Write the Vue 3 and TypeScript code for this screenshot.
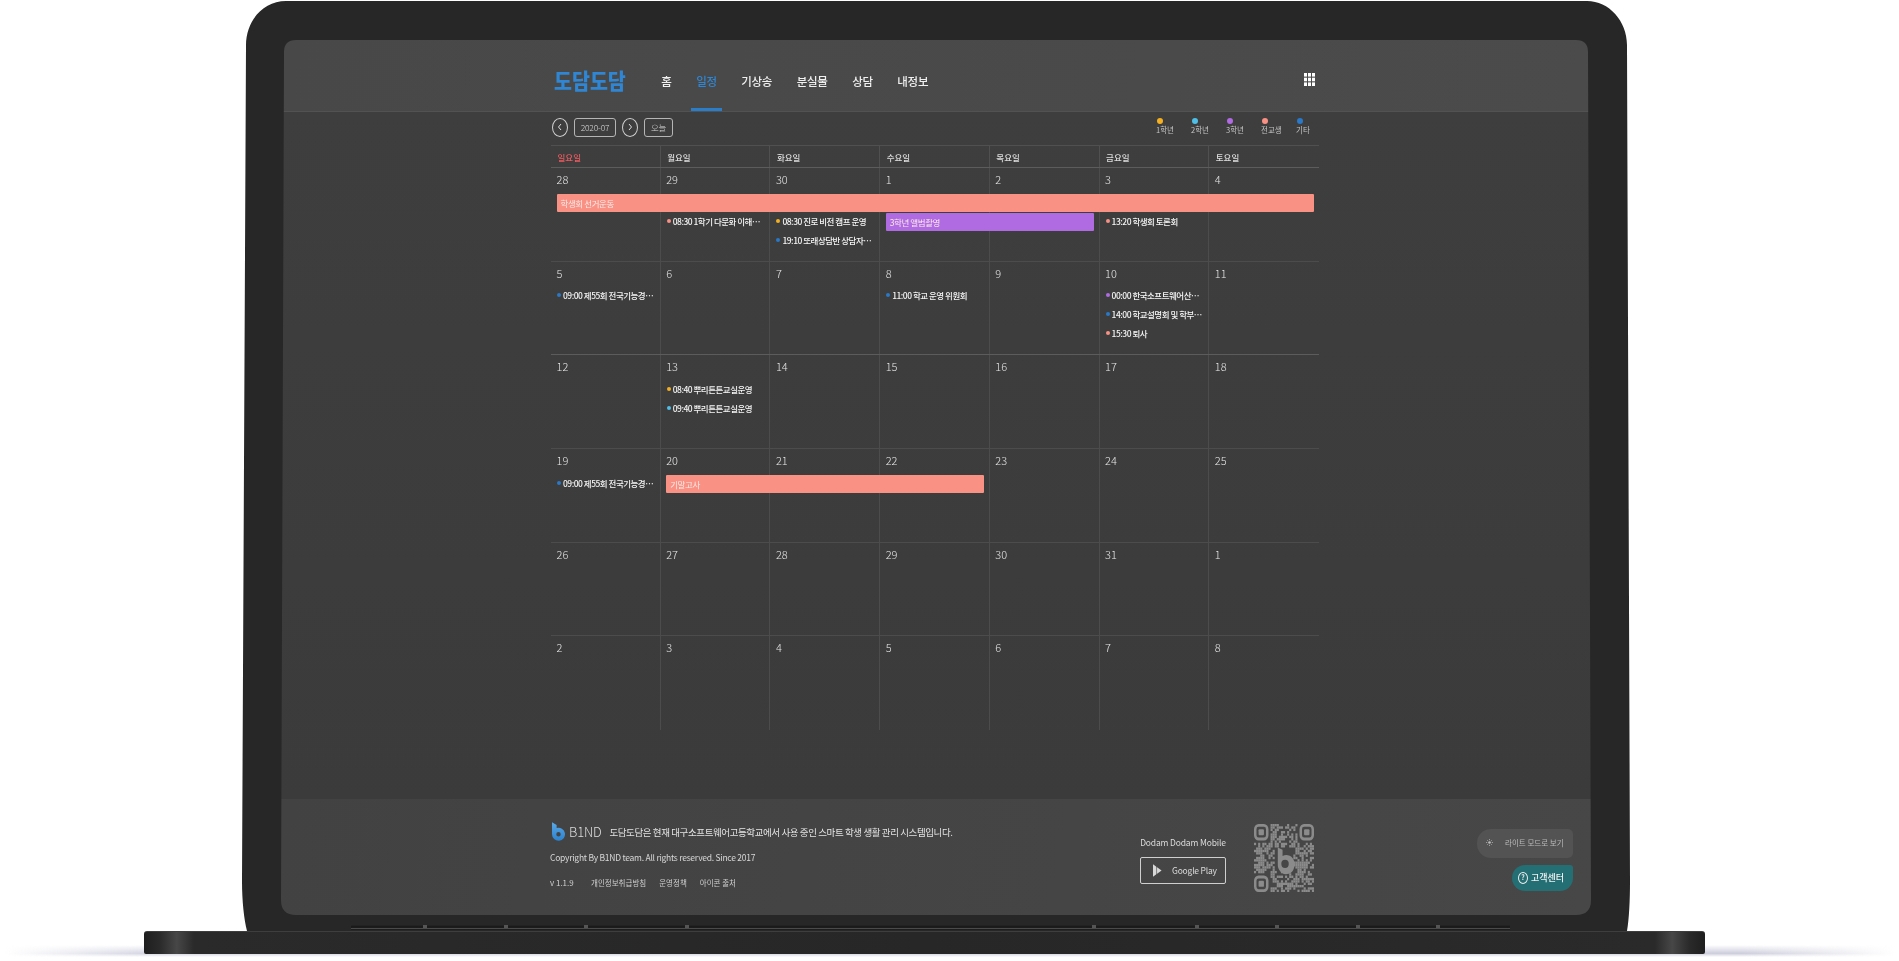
<script setup lang="ts">
type Kind = "first" | "second" | "third" | "transfer" | "etc";

interface CalEvent {
  col: number;
  row: number;
  span?: number;
  kind: Kind;
  label: string;
}

interface Week {
  days: number[];
  events: CalEvent[];
}

const navItems = ["홈", "일정", "기상송", "분실물", "상담", "내정보"];
const weekdays = ["일요일", "월요일", "화요일", "수요일", "목요일", "금요일", "토요일"];

const legend: { kind: Kind; label: string }[] = [
  { kind: "first", label: "1학년" },
  { kind: "second", label: "2학년" },
  { kind: "third", label: "3학년" },
  { kind: "transfer", label: "전교생" },
  { kind: "etc", label: "기타" },
];

const weeks: Week[] = [
  {
    days: [28, 29, 30, 1, 2, 3, 4],
    events: [
      { col: 1, row: 2, span: 7, kind: "transfer", label: "학생회 선거운동" },
      { col: 2, row: 3, kind: "transfer", label: "08:30 1학기 다문화 이해…" },
      { col: 3, row: 3, kind: "first", label: "08:30 진로 비전 캠프 운영" },
      { col: 4, row: 3, span: 2, kind: "third", label: "3학년 앨범촬영" },
      { col: 6, row: 3, kind: "transfer", label: "13:20 학생회 토론회" },
      { col: 3, row: 4, kind: "etc", label: "19:10 또래상담반 상담자…" },
    ],
  },
  {
    days: [5, 6, 7, 8, 9, 10, 11],
    events: [
      { col: 1, row: 2, kind: "etc", label: "09:00 제55회 전국기능경…" },
      { col: 4, row: 2, kind: "etc", label: "11:00 학교 운영 위원회" },
      { col: 6, row: 2, kind: "third", label: "00:00 한국소프트웨어산…" },
      { col: 6, row: 3, kind: "etc", label: "14:00 학교설명회 및 학부…" },
      { col: 6, row: 4, kind: "transfer", label: "15:30 퇴사" },
    ],
  },
  {
    days: [12, 13, 14, 15, 16, 17, 18],
    events: [
      { col: 2, row: 2, kind: "first", label: "08:40 뿌리튼튼교실운영" },
      { col: 2, row: 3, kind: "second", label: "09:40 뿌리튼튼교실운영" },
    ],
  },
  {
    days: [19, 20, 21, 22, 23, 24, 25],
    events: [
      { col: 1, row: 2, kind: "etc", label: "09:00 제55회 전국기능경…" },
      { col: 2, row: 2, span: 3, kind: "transfer", label: "기말고사" },
    ],
  },
  { days: [26, 27, 28, 29, 30, 31, 1], events: [] },
  { days: [2, 3, 4, 5, 6, 7, 8], events: [] },
];

const hingeMarks = [423, 504, 584, 685, 1092, 1195, 1275, 1356, 1436];

// 실제 코드가 아니라 모양만 맞춘 QR 패턴
const QR_SIZE = 29;
function inFinder(x: number, y: number) {
  const near = (v: number) => v < 8;
  const far = (v: number) => v > QR_SIZE - 9;
  return (near(x) && near(y)) || (far(x) && near(y)) || (near(x) && far(y));
}
function inLogo(x: number, y: number) {
  return x >= 10 && x <= 18 && y >= 10 && y <= 19;
}
const qrCells: { x: number; y: number }[] = [];
let seed = 1237;
for (let y = 0; y < QR_SIZE; y++) {
  for (let x = 0; x < QR_SIZE; x++) {
    seed = (seed * 1103515245 + 12345) & 0x7fffffff;
    if (inFinder(x, y) || inLogo(x, y)) continue;
    if ((seed >> 16) % 100 < 56) qrCells.push({ x, y });
  }
}
const qrFinders = [
  { x: 0, y: 0 },
  { x: 22, y: 0 },
  { x: 0, y: 22 },
];
</script>

<template>
  <div class="stage">
    <div class="floor"></div>

    <div class="lid">
      <div class="screen">
        <header class="topbar">
          <div class="container topbar-inner">
            <div class="logo">도담도담</div>
            <nav class="nav">
              <a
                v-for="item in navItems"
                :key="item"
                class="nav-item"
                :class="{ active: item === '일정' }"
              >{{ item }}</a>
            </nav>
            <svg class="apps" viewBox="0 0 11 13" fill="#fff">
              <template v-for="r in 3" :key="r">
                <rect v-for="c in 3" :key="c" :x="(c - 1) * 4" :y="(r - 1) * 4.7" width="3" height="3.6" />
              </template>
            </svg>
          </div>
        </header>

        <main class="main">
          <div class="container">
            <div class="toolbar">
              <div class="controls">
                <button class="round-btn">
                  <svg viewBox="0 0 6 8" class="chev"><path d="M4 1 1.5 4 4 7" /></svg>
                </button>
                <div class="box-btn month">2020-07</div>
                <button class="round-btn">
                  <svg viewBox="0 0 6 8" class="chev"><path d="M2 1 4.5 4 2 7" /></svg>
                </button>
                <div class="box-btn today">오늘</div>
              </div>
              <ul class="legend">
                <li v-for="l in legend" :key="l.kind" class="legend-item">
                  <span class="legend-dot" :class="l.kind"></span>
                  <span class="legend-label">{{ l.label }}</span>
                </li>
              </ul>
            </div>

            <div class="calendar">
              <div class="weekdays">
                <div
                  v-for="(d, i) in weekdays"
                  :key="d"
                  class="weekday"
                  :class="{ sunday: i === 0 }"
                >{{ d }}</div>
              </div>
              <div v-for="(week, w) in weeks" :key="w" class="week" :class="{ strong: w === 1 }">
                <div
                  v-for="(day, i) in week.days"
                  :key="i"
                  class="cell"
                  :style="{ gridColumn: i + 1 }"
                >{{ day }}</div>
                <template v-for="ev in week.events" :key="ev.label + ev.col">
                  <div
                    v-if="ev.span"
                    class="bar"
                    :class="ev.kind"
                    :style="{ gridColumn: `${ev.col} / span ${ev.span}`, gridRow: ev.row }"
                  >{{ ev.label }}</div>
                  <div
                    v-else
                    class="item"
                    :style="{ gridColumn: ev.col, gridRow: ev.row }"
                  >
                    <span class="item-dot" :class="ev.kind"></span>{{ ev.label }}
                  </div>
                </template>
              </div>
            </div>
          </div>
        </main>

        <footer class="footer">
          <div class="footer-left">
            <div class="footer-brand">
              <svg class="b1nd" viewBox="0 0 14 20">
                <defs>
                  <linearGradient id="b1ndBlue" x1="0" y1="0" x2="0" y2="1">
                    <stop offset="0" stop-color="#5aa9e6" />
                    <stop offset="1" stop-color="#2c82cf" />
                  </linearGradient>
                </defs>
                <path
                  fill="url(#b1ndBlue)"
                  fill-rule="evenodd"
                  d="M0 0 5 3V6.3A7 7 0 1 1 0 13ZM7 10.6A2.4 2.4 0 1 0 7 15.4 2.4 2.4 0 1 0 7 10.6Z"
                />
              </svg>
              <span class="b1nd-name">B1ND</span>
              <span class="footer-desc">도담도담은 현재 대구소프트웨어고등학교에서 사용 중인 스마트 학생 생활 관리 시스템입니다.</span>
            </div>
            <div class="copyright">Copyright By B1ND team. All rights reserved. Since 2017</div>
            <div class="footer-links">
              <span class="version">v 1.1.9</span>
              <a>개인정보취급방침</a>
              <a>운영정책</a>
              <a>아이콘 출처</a>
            </div>
          </div>

          <div class="store">
            <div class="store-title">Dodam Dodam Mobile</div>
            <div class="store-btn">
              <svg class="play" viewBox="0 0 10 14">
                <path d="M0 0 9.5 7 0 14Z" fill="#d8d8d8" />
                <path d="M4 0 4 14" stroke="#4a4a4a" stroke-width="0.7" />
              </svg>
              <span>Google Play</span>
            </div>
          </div>

          <svg class="qr" viewBox="0 0 29 29" preserveAspectRatio="none" fill="#8b8b8b">
            <rect v-for="(c, i) in qrCells" :key="i" :x="c.x" :y="c.y" width="1.02" height="1.02" />
            <g v-for="(f, i) in qrFinders" :key="'f' + i">
              <rect :x="f.x + 0.6" :y="f.y + 0.6" width="5.8" height="5.8" rx="1.6" fill="none" stroke="#8b8b8b" stroke-width="1.2" />
              <rect :x="f.x + 2.2" :y="f.y + 2.2" width="2.6" height="2.6" rx="0.5" />
            </g>
            <path
              fill-rule="evenodd"
              d="M11.5 10 13.8 11V13.6A4.1 4.1 0 1 1 11.5 17ZM15 15.2A1.8 1.8 0 1 0 15 18.8 1.8 1.8 0 1 0 15 15.2Z"
            />
          </svg>

          <div class="side-actions">
            <div class="light-mode">
              <svg class="sun" viewBox="0 0 8 8" stroke="#bdbdbd" stroke-width="0.8">
                <circle cx="4" cy="4" r="1.5" fill="#bdbdbd" stroke="none" />
                <path d="M4 0V1.4M4 6.6V8M0 4H1.4M6.6 4H8M1.2 1.2 2.1 2.1M5.9 5.9 6.8 6.8M1.2 6.8 2.1 5.9M5.9 2.1 6.8 1.2" />
              </svg>
              <span>라이트 모드로 보기</span>
            </div>
            <div class="support">
              <span class="support-icon">?</span>
              <span>고객센터</span>
            </div>
          </div>
        </footer>
      </div>

      <div class="hinge">
        <i v-for="m in hingeMarks" :key="m" class="hinge-mark" :style="{ left: `${m - 351}px` }"></i>
      </div>
    </div>

    <div class="base"></div>
  </div>
</template>

<style>
html,
body {
  margin: 0;
  background: #fff;
}
</style>

<style scoped>
* {
  box-sizing: border-box;
}

.stage {
  position: relative;
  height: 961px;
  width: 1899px;
  overflow: hidden;
  background: #fff;
  padding-top: 1px;
  font-family: "Noto Sans CJK KR", "Noto Sans", sans-serif;
  color: #ddd;
}

.floor {
  position: absolute;
  left: 5px;
  right: 5px;
  top: 945px;
  height: 12px;
  background: linear-gradient(
    90deg,
    rgba(190, 192, 212, 0) 0,
    #c2c4d6 8%,
    #bcbdd0 92%,
    rgba(190, 192, 212, 0) 100%
  );
  -webkit-mask-image: linear-gradient(180deg, transparent, rgba(0, 0, 0, 0.75) 70%, transparent);
  mask-image: linear-gradient(180deg, transparent, rgba(0, 0, 0, 0.75) 70%, transparent);
}

.lid {
  position: relative;
  width: 1388px;
  height: 930px;
  margin-left: 242px;
  padding: 39px 39px 0;
  background: #272727;
  clip-path: path("M4 44 C4 20 21 0 44 0 L1345 0 C1367 0 1385 20 1385 44 L1388 880 C1388 900 1387 918 1385 930 L5 930 C2 918 0 900 0 880 Z");
}

.screen {
  display: flex;
  flex-direction: column;
  width: 1310px;
  height: 875px;
  clip-path: path("M3 12 Q3 0 15 0 L1295 0 Q1307 0 1307 12 L1310 860 Q1310 875 1295 875 L15 875 Q0 875 0 860 Z");
  background: #3c3c3c;
  filter: blur(0.3px);
}

.container {
  width: 768px;
  margin-left: 270px;
}

.topbar {
  height: 72px;
  flex-shrink: 0;
  background: linear-gradient(100deg, #484848, #4b4b4b);
  border-bottom: 1px solid #525252;
}

.topbar-inner {
  display: flex;
  align-items: stretch;
  height: 71px;
  padding: 0 4px 0 3px;
}

.logo {
  align-self: center;
  margin: 8px 30.5px 0 0;
  font-size: 19.5px;
  line-height: 20px;
  font-weight: 900;
  color: #2f86d4;
  transform: scaleY(1.08);
}

.nav {
  display: flex;
  gap: 14.6px;
}

.nav-item {
  display: flex;
  align-items: center;
  padding: 13px 5px 0;
  font-size: 11.5px;
  letter-spacing: -0.3px;
  font-weight: 500;
  color: #f0f0f0;
  border-bottom: 3px solid transparent;
}

.nav-item.active {
  color: #2f86d4;
  border-bottom-color: #2a7ec9;
}

.apps {
  width: 11px;
  height: 13px;
  margin: 33px 0 0 auto;
}

.main {
  flex: 1;
  background: linear-gradient(180deg, #3e3e3e, #3b3b3b);
}

.toolbar {
  display: flex;
  justify-content: space-between;
  height: 33px;
  padding-left: 1px;
}

.controls {
  display: flex;
  align-items: center;
  gap: 6px;
  padding-bottom: 3px;
}

.round-btn {
  display: flex;
  align-items: center;
  justify-content: center;
  width: 16px;
  height: 19px;
  padding: 0;
  border: 1px solid #d0d0d0;
  border-radius: 50%;
  background: transparent;
}

.chev {
  width: 6px;
  height: 8px;
  fill: none;
  stroke: #ddd;
  stroke-width: 1;
}

.box-btn {
  display: flex;
  align-items: center;
  justify-content: center;
  height: 19px;
  border: 1px solid #b5b5b5;
  border-radius: 3px;
  font-size: 8.5px;
  letter-spacing: -0.2px;
  font-weight: 300;
  color: #d8d8d8;
}

.month {
  width: 42px;
}

.today {
  width: 29px;
}

.legend {
  display: flex;
  margin: 6px 0 0;
  padding: 0;
  list-style: none;
}

.legend-item {
  display: flex;
  flex-direction: column;
  align-items: flex-start;
  width: 35px;
}

.legend-item:last-child {
  width: 23px;
}

.legend-dot {
  width: 6px;
  height: 6px;
  margin-left: 1px;
  border-radius: 50%;
}

.legend-label {
  font-size: 7.5px;
  line-height: 12px;
  color: #c4c4c4;
  white-space: nowrap;
}

.first {
  background: #f5b021;
}

.second {
  background: #4fbfe8;
}

.third {
  background: #b06be3;
}

.transfer {
  background: #f99185;
}

.etc {
  background: #2a78c8;
}

.calendar {
  border-top: 1px solid #505050;
}

.weekdays {
  display: grid;
  grid-template-columns: repeat(7, 1fr);
  height: 22px;
  border-bottom: 1px solid #5c5c5c;
}

.weekday {
  display: flex;
  align-items: center;
  padding-left: 6.5px;
  font-size: 8.5px;
  font-weight: 500;
  color: #dedede;
  border-right: 1px solid #505050;
}

.weekday:last-child,
.cell:nth-child(7) {
  border-right: 0;
}

.sunday {
  color: #ea5a60;
}

.week {
  display: grid;
  grid-template-columns: repeat(7, 1fr);
  grid-template-rows: 26px 19px 19px 19px 1fr;
  height: 93.7px;
  border-bottom: 1px solid #4c4c4c;
}

.week:last-child {
  border-bottom: 0;
}

.week.strong {
  border-bottom-color: #5c5c5c;
}

.cell {
  grid-row: 1 / -1;
  padding: 3px 0 0 5.5px;
  font-size: 11px;
  line-height: 16px;
  font-weight: 300;
  color: #e6e6e6;
  border-right: 1px solid #4c4c4c;
}

.bar {
  display: flex;
  align-items: center;
  height: 18px;
  margin: 0 5.5px;
  padding: 0 4px;
  border-radius: 1px;
  font-size: 8.5px;
  letter-spacing: -0.4px;
  color: #fbe9e6;
  white-space: nowrap;
}

.item {
  display: flex;
  align-items: center;
  height: 17px;
  margin-top: -1px;
  padding-left: 6px;
  font-size: 8.5px;
  letter-spacing: -0.5px;
  font-weight: 500;
  color: #f5f5f5;
  white-space: nowrap;
}

.item-dot {
  flex-shrink: 0;
  width: 4px;
  height: 4px;
  margin-right: 2px;
  border-radius: 50%;
}

.footer {
  display: flex;
  height: 116px;
  flex-shrink: 0;
  padding-left: 269px;
  background: linear-gradient(100deg, #424242, #474747);
}

.footer-left {
  width: 590px;
  padding-top: 22.5px;
}

.footer-brand {
  display: flex;
  align-items: center;
  height: 20px;
}

.b1nd {
  width: 13px;
  height: 19px;
  margin-left: 2px;
}

.b1nd-name {
  margin: 0 8px 0 4px;
  font-size: 13px;
  letter-spacing: -0.2px;
  font-weight: 300;
  color: #dedede;
}

.footer-desc {
  font-size: 9.5px;
  letter-spacing: -0.4px;
  color: #e4e4e4;
}

.copyright {
  margin-top: 8px;
  font-size: 8.5px;
  letter-spacing: -0.25px;
  line-height: 14px;
  color: #d8d8d8;
}

.footer-links {
  display: flex;
  gap: 13px;
  margin-top: 12.5px;
  font-size: 7.5px;
  line-height: 14px;
  color: #cfcfcf;
}

.version {
  width: 28px;
  font-size: 8px;
}

.store {
  width: 86px;
  margin-right: 28px;
  padding-top: 37px;
}

.store-title {
  font-size: 8.5px;
  letter-spacing: -0.15px;
  line-height: 12px;
  text-align: center;
  color: #dcdcdc;
  white-space: nowrap;
}

.store-btn {
  display: flex;
  align-items: center;
  height: 27px;
  margin-top: 9px;
  padding: 0 0 2px 12px;
  gap: 10px;
  border: 1px solid #cfcfcf;
  border-radius: 2px;
  font-size: 8.5px;
  letter-spacing: -0.2px;
  color: #dcdcdc;
}

.play {
  width: 9px;
  height: 13px;
  margin-top: 2px;
}

.qr {
  width: 60px;
  height: 68px;
  margin-top: 25px;
}

.side-actions {
  display: flex;
  flex-direction: column;
  align-items: flex-end;
  gap: 7px;
  margin-left: auto;
  padding: 30px 18px 0 0;
}

.light-mode {
  display: flex;
  align-items: center;
  width: 96px;
  height: 29px;
  padding: 0 0 2px 9px;
  gap: 12px;
  border-radius: 14px 5px 5px 14px;
  background: #535353;
  font-size: 7.5px;
  color: #bcbcbc;
}

.sun {
  width: 7px;
  height: 7px;
}

.support {
  display: flex;
  align-items: center;
  width: 61px;
  height: 26px;
  padding: 0 0 1px 6px;
  gap: 3px;
  border-radius: 13px 3px 13px 13px;
  background: #246f74;
  font-size: 9px;
  font-weight: 500;
  color: #f2f2f2;
  white-space: nowrap;
}

.support-icon {
  display: flex;
  align-items: center;
  justify-content: center;
  width: 10px;
  height: 12px;
  border: 1px solid #eee;
  border-radius: 50%;
  font-size: 7px;
  line-height: 1;
}

.hinge {
  position: relative;
  width: 1159px;
  height: 5px;
  margin: 10px 0 0 70px;
  background: linear-gradient(180deg, #262626 0, #181818 35%, #1e1e1e 60%, #4a4a4a 60%, #4a4a4a 85%, #1d1d1d 85%);
}

.hinge-mark {
  position: absolute;
  top: 0;
  width: 4px;
  height: 3px;
  background: #555;
}

.base {
  position: relative;
  width: 1561px;
  height: 23px;
  margin-left: 144px;
  border-radius: 3px 3px 2px 2px;
  border-top: 1px solid #3e3e3e;
  background: linear-gradient(
    90deg,
    #1e1e1e 0,
    #2a2a2a 1%,
    #474747 2.1%,
    #2a2a2a 3.2%,
    #272727 50%,
    #2a2a2a 96.8%,
    #474747 97.9%,
    #2a2a2a 99%,
    #1e1e1e 100%
  );
}
</style>
